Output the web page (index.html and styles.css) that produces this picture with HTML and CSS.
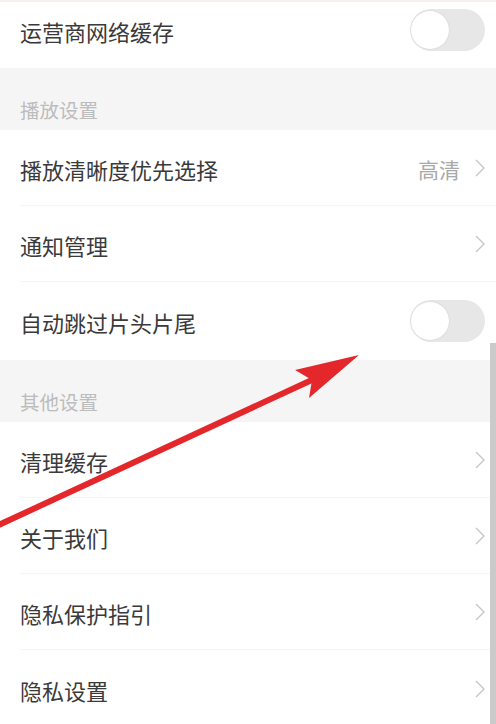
FILE: index.html
```html
<!DOCTYPE html>
<html lang="zh-CN">
<head>
<meta charset="utf-8">
<title>设置</title>
<link rel="stylesheet" href="styles.css">
</head>
<body>
<div class="page">
  <div class="row row-first">
    <span class="label">运营商网络缓存</span>
    <span class="switch"><span class="knob"></span></span>
  </div>

  <div class="section">播放设置</div>
  <div class="row">
    <span class="label">播放清晰度优先选择</span>
    <span class="right"><span class="value">高清</span><svg class="chev" viewBox="0 0 10 18"><path d="M1 1 L9 9 L1 17"/></svg></span>
  </div>
  <div class="row">
    <span class="label">通知管理</span>
    <span class="right"><svg class="chev" viewBox="0 0 10 18"><path d="M1 1 L9 9 L1 17"/></svg></span>
  </div>
  <div class="row row-last">
    <span class="label">自动跳过片头片尾</span>
    <span class="switch"><span class="knob"></span></span>
  </div>

  <div class="section">其他设置</div>
  <div class="row">
    <span class="label">清理缓存</span>
    <span class="right"><svg class="chev" viewBox="0 0 10 18"><path d="M1 1 L9 9 L1 17"/></svg></span>
  </div>
  <div class="row">
    <span class="label">关于我们</span>
    <span class="right"><svg class="chev" viewBox="0 0 10 18"><path d="M1 1 L9 9 L1 17"/></svg></span>
  </div>
  <div class="row">
    <span class="label">隐私保护指引</span>
    <span class="right"><svg class="chev" viewBox="0 0 10 18"><path d="M1 1 L9 9 L1 17"/></svg></span>
  </div>
  <div class="row row-last">
    <span class="label">隐私设置</span>
    <span class="right"><svg class="chev" viewBox="0 0 10 18"><path d="M1 1 L9 9 L1 17"/></svg></span>
  </div>

  <div class="scrollbar"></div>

  <svg class="arrow" viewBox="0 0 496 724" width="496" height="724">
    <line x1="-10" y1="527" x2="314" y2="377" stroke="#e3272b" stroke-width="6"/>
    <polygon points="359,353 295,368 312,378 309,396" fill="#e3272b"/>
  </svg>
</div>
</body>
</html>
```
FILE: styles.css
```css
html, body {
  margin: 0;
  padding: 0;
  background: #ffffff;
}

.page {
  position: relative;
  width: 496px;
  height: 724px;
  overflow: hidden;
  font-family: "Noto Sans CJK SC", "Noto Sans", sans-serif;
  border-top: 2px solid #f9efed;
  box-sizing: border-box;
}

.row {
  display: flex;
  align-items: center;
  justify-content: space-between;
  height: 76px;
  padding: 0 11px 0 20px;
  box-sizing: border-box;
  background: #ffffff;
  position: relative;
}

.row::after {
  content: "";
  position: absolute;
  left: 20px;
  right: 0;
  bottom: 0;
  height: 1px;
  background: #f6f6f6;
}

.row-first {
  margin-top: -10px;
  height: 76px;
}

.row-first::after,
.row-last::after {
  display: none;
}

.row-last {
  height: 78px;
}

.label {
  font-size: 22px;
  color: #3a3a3a;
  line-height: 1;
  padding-top: 2px;
}

.right {
  display: flex;
  align-items: center;
  gap: 15px;
}

.value {
  font-size: 21px;
  color: #a9a9a9;
  line-height: 1;
  padding-top: 2px;
}

.chev {
  width: 10px;
  height: 18px;
  fill: none;
  stroke: #c6c6c6;
  stroke-width: 1.4;
}

.switch {
  width: 75px;
  height: 42px;
  border-radius: 21px;
  background: #e7e7e7;
  position: relative;
  box-sizing: border-box;
}

.knob {
  position: absolute;
  left: 1px;
  top: 2px;
  width: 38px;
  height: 38px;
  border-radius: 50%;
  background: #ffffff;
  box-shadow: 0 0 2px rgba(0, 0, 0, 0.12);
}

.section {
  height: 62px;
  background: #f5f5f5;
  box-sizing: border-box;
  padding: 32px 0 0 20px;
  font-size: 19.5px;
  line-height: 1;
  color: #bcbcbc;
}

.scrollbar {
  position: absolute;
  right: 0;
  top: 341px;
  width: 6px;
  bottom: 0;
  background: #cacaca;
}

.arrow {
  position: absolute;
  left: 0;
  top: 0;
  pointer-events: none;
}
```
